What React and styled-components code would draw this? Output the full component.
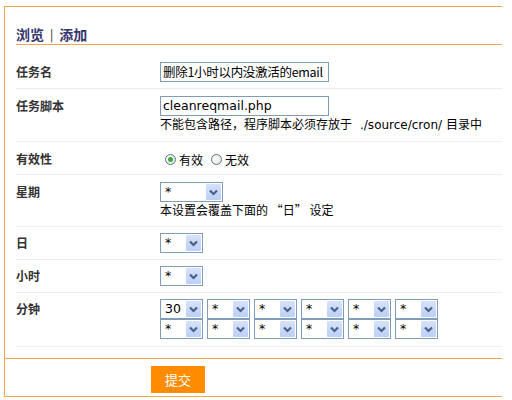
import React from "react";
import styled, { createGlobalStyle } from "styled-components";

const Global = createGlobalStyle`
  html, body { margin: 0; padding: 0; background: #fff; }
  body { font-family: "Liberation Sans", "Noto Sans CJK SC", sans-serif; font-size: 12px; color: #000; }
`;

const Frame = styled.div`
  margin: 6px 0 0 4px;
  width: 498px;
  border-top: 1px solid #f2a54a;
  border-left: 1px solid #f2a54a;
  border-bottom: 1px solid #f2a54a;
  height: 391px;
  box-sizing: border-box;
  display: flex;
  flex-direction: column;
`;

const Heading = styled.div`
  margin: 0 0 0 11px;
  padding-top: 17px;
  height: 20px;
  border-bottom: 1px solid #f2a54a;
  font-family: "Noto Sans CJK SC", sans-serif;
  font-weight: bold;
  font-size: 14px;
  line-height: 20px;
  color: #35356e;
  display: flex;
  align-items: center;
  gap: 6px;
`;

const Sep = styled.span`
  font-weight: normal;
  font-size: 12px;
  color: #222;
`;

const Table = styled.div`
  margin: 10px 0 0 11px;
  display: flex;
  flex-direction: column;
`;

const Row = styled.div`
  display: grid;
  grid-template-columns: 144px 1fr;
  border-bottom: 1px solid #eeeeee;
  padding: ${(p) => p.$pad || "6px 0 6px 0"};
`;

const Label = styled.div`
  font-family: "Noto Sans CJK SC", sans-serif;
  font-weight: bold;
  font-size: 12px;
  line-height: 16px;
  color: #333;
  padding-top: 2px;
`;

const Value = styled.div`
  display: flex;
  flex-direction: column;
  align-items: flex-start;
`;

const TextInput = styled.div`
  box-sizing: border-box;
  width: 169px;
  height: 20px;
  border: 1px solid #7f9db9;
  padding: 0 2px;
  font-family: "DejaVu Sans", "Noto Sans CJK SC", sans-serif;
  font-size: 12.5px;
  line-height: 18px;
  white-space: nowrap;
  overflow: hidden;
  color: #000;
`;

const CjkInput = styled(TextInput)`
  font-family: "Noto Sans CJK SC", sans-serif;
  font-size: 12.5px;
  letter-spacing: -0.3px;
  padding: 0 1px 0 2px;
`;

const Hint = styled.div`
  font-family: "Noto Sans CJK SC", "DejaVu Sans", sans-serif;
  font-size: 12px;
  line-height: 16px;
  color: #000;
  white-space: nowrap;
`;

const HintLatin = styled.span`
  font-family: "DejaVu Sans", sans-serif;
  font-size: 12px;
  margin: 0 4px 0 8px;
`;

const Radios = styled.div`
  display: flex;
  align-items: center;
  height: 20px;
  padding-left: 5px;
  gap: 4px;
`;

const RadioItem = styled.label`
  display: flex;
  align-items: center;
  gap: 3px;
  margin-right: 4px;
  font-family: "Noto Sans CJK SC", sans-serif;
  font-size: 12px;
`;

const RadioDot = styled.span`
  box-sizing: border-box;
  width: 11px;
  height: 11px;
  border-radius: 50%;
  border: 1px solid #5a7590;
  background: radial-gradient(circle at 35% 35%, #ffffff 0%, #e4e4dc 90%);
  display: flex;
  align-items: center;
  justify-content: center;
  &::after {
    content: "";
    width: 5px;
    height: 5px;
    border-radius: 50%;
    background: ${(p) => (p.$checked ? "#3fa93f" : "transparent")};
  }
`;

const SelectBox = styled.div`
  box-sizing: border-box;
  width: ${(p) => p.$w || 43}px;
  height: 20px;
  border: 1px solid #7f9db9;
  background: #fff;
  display: flex;
  align-items: stretch;
  padding: 1px;
`;

const SelectText = styled.span`
  flex: 1;
  padding-left: 3px;
  font-family: "DejaVu Sans", sans-serif;
  font-size: 12.5px;
  line-height: 16px;
  color: #000;
`;

const SelectBtn = styled.span`
  width: 15px;
  background: linear-gradient(#d6e2fc, #bccff8);
  border-radius: 1px;
  display: flex;
  align-items: center;
  justify-content: center;
`;

const MinuteGrid = styled.div`
  display: grid;
  grid-template-columns: repeat(6, 43px);
  column-gap: 4px;
  row-gap: 0;
`;

const Footer = styled.div`
  margin-top: 11px;
  border-top: 1px solid #f2a54a;
  padding: 7px 0 0 146px;
`;

const Submit = styled.button`
  width: 54px;
  height: 27px;
  border: none;
  background: #ff8c00;
  color: #fff;
  font-family: "Noto Sans CJK SC", sans-serif;
  font-size: 13px;
  padding: 0;
`;

function Select({ value = "*", w }) {
  return (
    <SelectBox $w={w}>
      <SelectText>{value}</SelectText>
      <SelectBtn>
        <svg width="9" height="7" viewBox="0 0 9 7">
          <path d="M1 1.5 L4.5 5 L8 1.5" fill="none" stroke="#4d6185" strokeWidth="2.2" />
        </svg>
      </SelectBtn>
    </SelectBox>
  );
}

export default function App() {
  const minutes = ["30", "*", "*", "*", "*", "*", "*", "*", "*", "*", "*", "*"];
  return (
    <>
      <Global />
      <Frame>
        <Heading>
          <span>浏览</span>
          <Sep>|</Sep>
          <span>添加</span>
        </Heading>
        <Table>
          <Row $pad="7px 0 6px 0">
            <Label>任务名</Label>
            <Value>
              <CjkInput>删除1小时以内没激活的email</CjkInput>
            </Value>
          </Row>
          <Row $pad="7px 0 8px 0">
            <Label>任务脚本</Label>
            <Value>
              <TextInput>cleanreqmail.php</TextInput>
              <Hint>
                不能包含路径，程序脚本必须存放于<HintLatin>./source/cron/</HintLatin>目录中
              </Hint>
            </Value>
          </Row>
          <Row $pad="7px 0 5px 0">
            <Label>有效性</Label>
            <Value>
              <Radios>
                <RadioItem>
                  <RadioDot $checked />
                  有效
                </RadioItem>
                <RadioItem>
                  <RadioDot />
                  无效
                </RadioItem>
              </Radios>
            </Value>
          </Row>
          <Row $pad="7px 0 8px 0">
            <Label>星期</Label>
            <Value>
              <Select w={63} />
              <Hint>本设置会覆盖下面的 “日” 设定</Hint>
            </Value>
          </Row>
          <Row>
            <Label>日</Label>
            <Value>
              <Select />
            </Value>
          </Row>
          <Row>
            <Label>小时</Label>
            <Value>
              <Select />
            </Value>
          </Row>
          <Row $pad="6px 0 7px 0">
            <Label>分钟</Label>
            <Value>
              <MinuteGrid>
                {minutes.map((m, i) => (
                  <Select key={i} value={m} />
                ))}
              </MinuteGrid>
            </Value>
          </Row>
        </Table>
        <Footer>
          <Submit>提交</Submit>
        </Footer>
      </Frame>
    </>
  );
}
